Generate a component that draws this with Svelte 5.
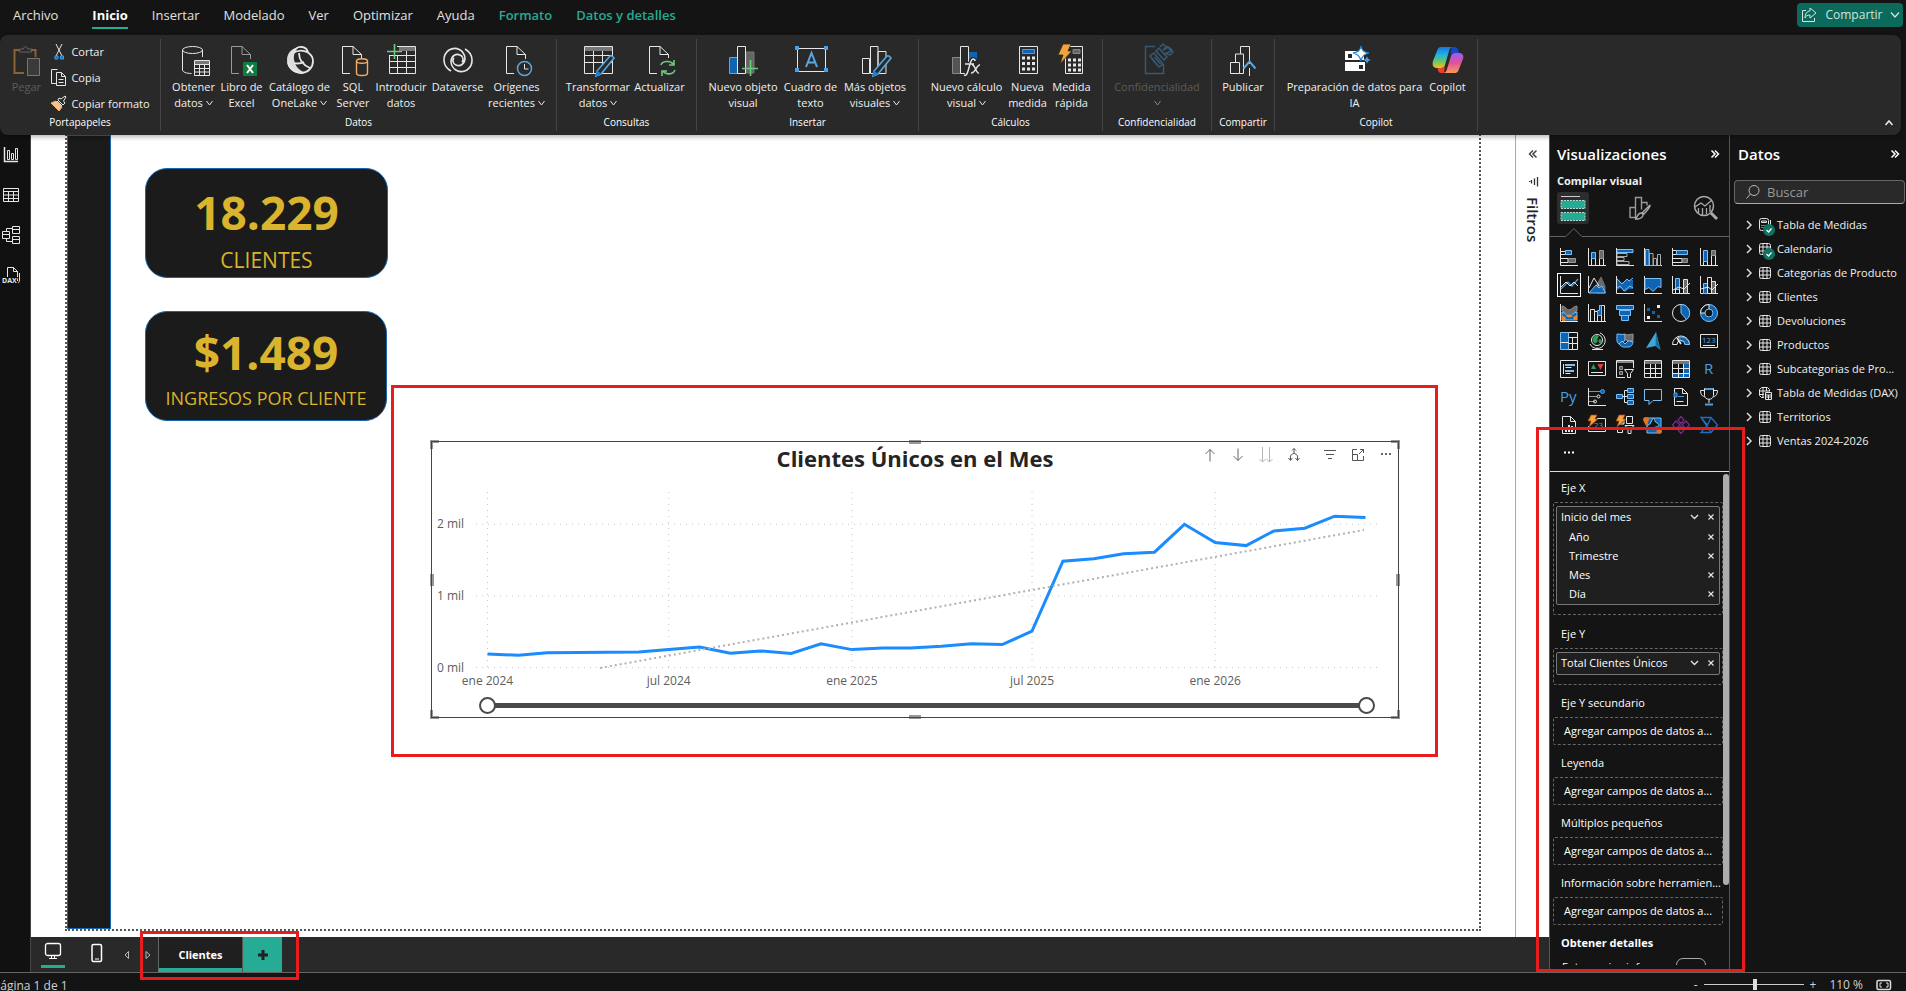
<script>
  const svg = (w, h, body, stroke = '#e6e6e6') =>
    `<svg width="${w}" height="${h}" viewBox="0 0 ${w} ${h}" fill="none" stroke="${stroke}" aria-hidden="true">${body}</svg>`;

  const B = '#0d65b3';
  const L = '#7cc0f4';
  const G = '#6b6b6b';

  const pencil = '<path d="M30 12l2 2-13 16-5 2 1-5 13-15z" fill="#292929" stroke="#5aa7e0" stroke-width="1.6"/><path d="M15 27l4 3-5 2z" fill="#1f7fd0" stroke="#1f7fd0"/>';
  const doc = '<path d="M16 2.500H5.500V29.500H13M16 2.500V10.500H24.500M16 2.500L24.500 10.500V15"/>';

  const big = {
    get: '<ellipse cx="14.500" cy="6" rx="10" ry="3.500"/><path d="M4.500 6V26c0 2 4 3.500 9 3.500M24.500 6v7"/><path d="M16.500 16.500h15v15h-15z" fill="#292929"/><path d="M17 17h14v3H17z" fill="#777" stroke="none"/><path d="M16.500 20.500h15M16.500 24.500h15M16.500 28h15M21.500 20v11M26.500 20v11"/>',
    excel: doc.replace('/>', ' stroke="#999"/>') + '<rect x="17" y="18" width="14" height="14" fill="#107c41" stroke="none"/><path d="M21 21l6 8M27 21l-6 8" stroke="#fff" stroke-width="2"/>',
    onelake: '<path d="M15 3C8 4 3 9 3 16c0 7 5 12 11 13 3 .5 6 .5 8-.5-6-1-11-6-12-13C9.500 11 11 6 15 3z" fill="#ddd" stroke="none"/><path d="M9 9c2-5 6-6.500 9-6 3 .5 5.500 2.500 6 5.500M9 9c4-2.500 10-3 15-.500M24 8.500c3 2 5 5 5 8.500 0 6-4 11-11 12-8 0-13-5-14-11M15 9c0 7 4 12 11 15M10 19c4 1 8 0 10-1" stroke-width="1.800"/>',
    sql: doc + '<path d="M19.500 17v12c0 3.400 11 3.400 11 0V17" fill="#292929" stroke="#f2ae66" stroke-width="1.400"/><ellipse cx="25" cy="17" rx="5.500" ry="2.300" fill="#292929" stroke="#f2ae66" stroke-width="1.400"/>',
    enter: '<path d="M12 2.500h18.500v27h-26V12M4 11.500h26.500M4 17.500h26.500M4 23.500h26.500M12.500 12v17M21.500 7v22"/><path d="M14 3h16v4H14z" fill="#777" stroke="none"/><path d="M2 7.500h15M9.500 0v15" stroke="#6ccb7f" stroke-width="1.600"/>',
    dataverse: '<path d="M9 27C0 22 0 11 7 6c7-4 15 0 16 8 0 6-5 9-9 7-3-1-4-5-2-7M23 5c9 5 9 16 2 21-7 4-15 0-16-8 0-6 5-9 9-7 3 1 4 5 2 7" stroke-width="1.600"/>',
    recent: doc + '<circle cx="23.500" cy="24.500" r="7" fill="#292929" stroke="#5aa7e0" stroke-width="1.500"/><path d="M23.500 20v5h4" stroke="#e6e6e6"/>',
    transform: '<path d="M2.500 2.500h28v27h-28zM2 11.500h28M2 18.500h28M11.500 7v22M20.500 7v22"/><path d="M3 3h27v4H3z" fill="#777" stroke="none"/>' + pencil,
    refresh: doc.replace('V15', 'V14') + '<path d="M17 21c1-4 9-5 12-1M30 16v5h-5M31 26c-2 5-9 5-12 1M18 32v-5h5" stroke="#6ccb7f" stroke-width="1.600"/>',
    visual: '<path d="M2.500 13.500h8v16h-8z" fill="#0d65b3" stroke="#5aa7e0"/><path d="M19 8h8v21h-8z" fill="#666" stroke="#777"/><path d="M10.500 2.500h8v27h-8z" fill="#292929"/><path d="M15 24.500h16M23.500 16v16" stroke="#6ccb7f" stroke-width="1.600"/>',
    textbox: '<path d="M2.500 4.500h28v23h-28z"/><path d="M0 3h4v4H0zM29 3h4v4h-4zM0 25h4v4H0zM29 25h4v4h-4z" fill="#4aa0e6" stroke="none" transform="translate(0 -1)"/><path d="M11 23l5.500-14L22 23M13 18.500h7" stroke="#5aa7e0" stroke-width="2"/>',
    more: '<path d="M3.500 14.500h7v15h-7zM19 7.500h8v22h-8zM11.500 2.500h7.500v27h-7.500z" fill="#292929"/>' + pencil,
    calc: '<path d="M1.500 13.500h8v16h-8z" fill="#555" stroke="#888"/><path d="M18 8h8v8h-8z" fill="#0d65b3" stroke="none"/><path d="M9.500 2.500h8v27h-8z"/><path d="M13 31c5 3 5-16 9-16 2 0 2 1 2 2M14 20h9M21 21c3-1 4 9 7 8M29 21c-3-1-5 9-9 8" stroke="#292929" stroke-width="4"/><path d="M13 31c5 3 5-16 9-16 2 0 2 1 2 2M14 20h9M21 21c3-1 4 9 7 8M29 21c-3-1-5 9-9 8" stroke-width="1.500"/>',
    measure: '<path d="M7.500 2.500h18v27h-18z"/><path d="M10.500 5.500h12v4h-12z" fill="#0d65b3" stroke="#4aa0e6"/><path d="M10 14h3m2 0h3m2 0h3M10 19.500h3m2 0h3m2 0h3M10 25h3m2 0h3m2 0h3" stroke-width="3"/>',
    quick: '<path d="M9.500 2.500h17v27h-17z"/><path d="M17 5.500h7v4h-7z" fill="#666" stroke="#888"/><path d="M12 16h3m2 0h3m2 0h3M12 21h3m2 0h3m2 0h3M12 26h3m2 0h3m2 0h3" stroke-width="3"/><path d="M7 0h8l-3 7h4L4 20l3-9H2z" fill="#f2a33a" stroke="#292929" stroke-width=".8"/>',
    sens: '<g stroke="#355a73" stroke-width="1.500"><path d="M14 2.500H4.500v27h18V20"/><path d="M9 12l9 11 4-3-9-11zM11 15l6 7M13.500 13l6 7"/><path d="M15 7l8 9 3-3-8-9zM19 3l3-3 3 3-3 3M24 10l6-3-3-4-4 3M26 2l4 3 2 3-3 3-3-1"/></g>',
    publish: '<path d="M3.500 29.500v-11h9v11zM8.500 18v-8h8v19.500h-4M13.500 10V2.500h9V20M22.500 24v8"/><path d="M16.500 24.500l6-7 6 7" stroke="#5aa7e0" stroke-width="2"/>',
    prep: '<rect x="6" y="18" width="20" height="9" fill="#fff" stroke="none"/><rect x="6" y="7" width="19" height="9" fill="#fff" stroke="none"/><path d="M9 10h4v4H9zM20 21h4v4h-4z" fill="#292929" stroke="none"/><path d="M22 2c1 5 3 6 8 7-5 1-7 3-8 8-1-5-3-7-8-8 5-1 7-2 8-7z" fill="#fff" stroke="#1f7fd0" stroke-width="1.200"/><path d="M28 12c.5 2 1 3 4 4-3 .5-3.500 2-4 4-.5-2-1-3.500-4-4 3-1 3.500-2 4-4z" fill="#4aa0e6" stroke="none"/>',
    copilot: '<defs><linearGradient id="cpA" x1="0" y1="0" x2="0" y2="1"><stop offset="0" stop-color="#1b74e8"/><stop offset=".4" stop-color="#22b8d8"/><stop offset=".7" stop-color="#6fc55c"/><stop offset="1" stop-color="#f4c120"/></linearGradient><linearGradient id="cpB" x1="0" y1="0" x2="0" y2="1"><stop offset="0" stop-color="#9b5cf0"/><stop offset=".5" stop-color="#e0529c"/><stop offset="1" stop-color="#fb9a55"/></linearGradient></defs><path d="M20 3h3c2 0 3 2 3.500 4l.8 2H21c-2 0-3 1-3.500 3z" fill="#1646c4" stroke="none"/><path d="M9 3h12c-2 0-3 1-4 4l-4 14c-.6 2-2 3-4 3H5c-4 0-5-3-4-7L5 7c.7-2.500 2-4 4-4z" fill="url(#cpA)" stroke="none"/><path d="M12 29H9c-2 0-3-1.500-3.500-5H9c2 0 3-1 4-3z" fill="#ee3f2a" stroke="none"/><path d="M23 29H11c2 0 3-1 4-4l4-13c.6-2 2-3 4-3h4c4 0 5 3 4 6l-4 10c-.7 2.500-2 4-4 4z" fill="url(#cpB)" stroke="none"/>'
  };

  const groups = [
    { name: 'Datos', w: 396, items: [
      { i: 'get', a: 'Obtener', b: 'datos', c: 1, w: 48 }, { i: 'excel', a: 'Libro de', b: 'Excel', w: 48 },
      { i: 'onelake', a: 'Catálogo de', b: 'OneLake', c: 1, w: 68 }, { i: 'sql', a: 'SQL', b: 'Server', w: 39 },
      { i: 'enter', a: 'Introducir', b: 'datos', w: 57 }, { i: 'dataverse', a: 'Dataverse', w: 56 },
      { i: 'recent', a: 'Orígenes', b: 'recientes', c: 1, w: 62 }] },
    { name: 'Consultas', w: 140, items: [
      { i: 'transform', a: 'Transformar', b: 'datos', c: 1, w: 66 }, { i: 'refresh', a: 'Actualizar', w: 57 }] },
    { name: 'Insertar', w: 222, items: [
      { i: 'visual', a: 'Nuevo objeto', b: 'visual', w: 75 }, { i: 'textbox', a: 'Cuadro de', b: 'texto', w: 60 },
      { i: 'more', a: 'Más objetos', b: 'visuales', c: 1, w: 69 }] },
    { name: 'Cálculos', w: 184, items: [
      { i: 'calc', a: 'Nuevo cálculo', b: 'visual', c: 1, w: 78 }, { i: 'measure', a: 'Nueva', b: 'medida', w: 44 },
      { i: 'quick', a: 'Medida', b: 'rápida', w: 44 }] },
    { name: 'Confidencialidad', w: 109, items: [{ i: 'sens', a: 'Confidencialidad', b: '', c: 1, w: 92, off: true }] },
    { name: 'Compartir', w: 63, items: [{ i: 'publish', a: 'Publicar', w: 50 }] },
    { name: 'Copilot', w: 203, items: [
      { i: 'prep', a: 'Preparación de datos para', b: 'IA', w: 143 }, { i: 'copilot', a: 'Copilot', w: 43 }] }
  ];

  const caret = svg(7, 6, '<path d="M.5 1l3 4 3-4"/>');
  const clip = [
    { t: 'Cortar', i: svg(20, 20, '<path d="M7 2l6 12M13 2L7 14"/><path d="M6 14h3v3H6zM11.500 14h3v3h-3z" fill="#0d65b3" stroke="#4aa0e6"/>') },
    { t: 'Copia', i: svg(20, 20, '<path d="M7 15.500H2.500v-14h6M7.500 4.500h5l4 4v9h-9zM12.500 4.500v4h4M9.500 11.500h5M9.500 14.500h5"/>') },
    { t: 'Copiar formato', i: svg(20, 20, '<path d="M2 9l8 8 3-4-6-6z" fill="#f6c58b" stroke="#f2ae66"/><path d="M8 7l5 5M9 6l5 5 2-2-1.500-2L17 3l-1-1-4 3-2-1z"/>') }
  ];
  const paste = svg(32, 32, '<path d="M9 6H4.500v23H14M22 6h3.500v7" stroke="#8a6234" stroke-width="2"/><path d="M9.500 8V5h4c0-3 4-3 4 0h4v3z" stroke="#666"/><path d="M17.500 14.500h12v17h-12z" fill="#3a3a3a" stroke="#777"/>');

  const rail = [
    ['Vista de informe', svg(18, 18, '<path d="M2.500 1v14.500H16" stroke-width="1.500"/><path d="M5.500 4.500h2v9h-2zM9.500 7.500h2v6h-2zM13.500 2.500h2v11h-2z"/>')],
    ['Vista de tabla', svg(18, 18, '<path d="M1.500 2.500h15v13h-15zM1 5.500h16M1 9h16M1 12.500h16M6.500 5v11M11.500 5v11"/>')],
    ['Vista de modelo', svg(20, 20, '<path d="M1.500 6.500h7v7h-7zM1.500 9.500h7M11.500 1.500h7v7h-7zM11.500 4.500h7M11.500 11.500h7v7h-7zM11.500 14.500h7M5.500 6V3.500h6M5.500 14v2.500h6"/>')],
    ['Vista de consultas DAX', svg(18, 18, '<path d="M5.500 11V1.500h6l4 4V15M11.500 1.500v4h4M17.500 7v7c0 2-1 3-2 3"/><text x="0" y="17" font-size="7" font-weight="700" font-family="Open Sans" fill="#e6e6e6" stroke="#111" stroke-width="2" paint-order="stroke">DAX</text>')]
  ];

  const axis = '<path d="M.5 0v17.500H18"/>';
  const bolt = '<path d="M3-1h6L7 3h3L1 11l2-6H0z" fill="#f2a33a" stroke="#a3400f" stroke-width=".7"/>';
  const vizIcons = [
    ['Gráfico de barras apiladas', `${axis}<path d="M1 3.500h5M1 6.500h5M1 10.500h7v4H1"/><path d="M5.500 2.500h6v4h-6z" fill="${B}" stroke="${L}"/><path d="M8.500 10.500h7v4h-7z" fill="${G}" stroke="#999"/>`],
    ['Gráfico de columnas apiladas', `${axis}<path d="M3.500 10.500h4v7h-4zM11.500 9.500h4v8h-4z"/><path d="M3.500 4.500h4v6h-4z" fill="${B}" stroke="${L}"/><path d="M11.500 2.500h4v8h-4z" fill="${G}" stroke="#999"/>`],
    ['Gráfico de barras agrupadas', `${axis}<path d="M1 1.500h16v3H1z" fill="${B}" stroke="${L}"/><path d="M1 5.500h10v3H1zM1 9.500h7v3H1zM1 13.500h12v3H1z" stroke="#aaa"/>`],
    ['Gráfico de columnas agrupadas', `${axis}<path d="M1.500 1.500h3.500v16H1.500z" fill="${B}" stroke="${L}"/><path d="M5.500 5.500h3.500v12H5.500zM9.500 10.500h3v7h-3zM13.500 6.500h3v11h-3z" stroke="#aaa"/>`],
    ['Barras 100% apiladas', `${axis}<path d="M1 2.500h4v4H1M1 10.500h9v4H1"/><path d="M4.500 2.500h11v4h-11z" fill="${B}" stroke="${L}"/><path d="M10.500 10.500h5v4h-5z" fill="${G}" stroke="#999"/>`],
    ['Columnas 100% apiladas', `${axis}<path d="M3.500 12.500h4v5h-4zM11.500 6.500h4v11h-4z"/><path d="M3.500 2.500h4v11h-4z" fill="${B}" stroke="${L}"/><path d="M11.500 2.500h4v5h-4z" fill="${G}" stroke="#999"/>`],
    ['Gráfico de líneas', `${axis}<path d="M1 13l7-7 4 4 6-7" stroke="#4aa0e6" stroke-width="1.200"/><path d="M1 11l5-5 4 4 4-4 4 4"/>`],
    ['Gráfico de áreas', `<path d="M8 10l5-9 4 9v7H9z" fill="${G}" stroke="${G}"/><path d="M.5 0v17M1 12L6 2l5 8"/><path d="M1 17l7-8 3 3 3-2 3.500 7z" fill="${B}" stroke="${L}"/>`],
    ['Áreas apiladas', `${axis}<path d="M1 2l5 5 4-3h7v9h-4l-4 3-4-4-4 2z" fill="${B}" stroke="none"/><path d="M1 3l5 5 5-5 2 2 4-3M1 12l3-2 4 5 6-5 3 2" stroke="${L}"/>`],
    ['Áreas 100% apiladas', `${axis}<path d="M1 2.500h16v9l-3-1-5 5-4-4-4 2z" fill="${B}" stroke="${L}"/>`],
    ['Columnas apiladas y líneas', `${axis}<path d="M3.500 2.500h4v11h-4z" fill="${B}" stroke="${L}"/><path d="M11.500 3.500h4v14h-4z" fill="${G}"/><path d="M3.500 17v-4M7.500 17v-4M1 14l6-3 5 2 6-6" />`],
    ['Columnas agrupadas y líneas', `${axis}<path d="M3.500 7.500h4v10h-4z" fill="${B}" stroke="${L}"/><path d="M11.500 5.500h4v12h-4z" fill="${G}"/><path d="M7.500 1.500h4v16h-4z" fill="#141414"/><path d="M1 13l7-2 4 3 6-6"/>`],
    ['Gráfico de la barra de herramientas', `<path d="M2 2c4 0 4 4 7 4s4-4 8-4v5c-3 0-4 4-8 4S5 7 2 7z" fill="${G}" stroke="#888"/><path d="M2 8c3 0 4 5 7 5s4-5 8-5v8H2z" fill="${B}" stroke="${L}"/><path d="M2 12l4 1-1 4H2zM7 11h5v2H7zM13 13l4-2v5h-3z" fill="#e58a2a" stroke="none"/>${axis}`],
    ['Gráfico de cascada', `${axis}<path d="M2.500 17V5.500h4V17M6.500 7.500h3V17M11.500 12V1.500h2V17M13.500 1.500h3V17"/><path d="M9.500 11.500v-5h2v-5h2v10z" fill="${B}" stroke="${L}"/>`],
    ['Embudo', `<path d="M.5 1.500h17v4h-17zM3.500 6.500h11v5h-11zM5.500 11.500h7v5h-7z" fill="${B}" stroke="${L}"/>`],
    ['Dispersión', `${axis}<path d="M13 1h3v3h-3zM3 12h3v3H3z" fill="#eee" stroke="none"/><path d="M3 4h3v3H3zM8 7h3v3H8zM13 11h3v3h-3z" fill="${B}" stroke="none"/>`],
    ['Gráfico circular', `<circle cx="9" cy="9" r="8.500"/><path d="M9 .5V9l5.500 6.500A8.500 8.500 0 0 0 9 .5z" fill="${B}" stroke="${L}"/>`],
    ['Anillo', `<circle cx="9" cy="9" r="6.500" stroke="${B}" stroke-width="4"/><circle cx="9" cy="9" r="8.500" stroke="${L}"/><circle cx="9" cy="9" r="4" stroke="${L}"/><path d="M9 2.500A6.500 6.500 0 0 0 2.500 9" stroke="#141414" stroke-width="3.500"/><path d="M9 .5v4.500M.5 9H5M9 .5A8.500 8.500 0 0 0 .5 9"/>`],
    ['Treemap', `<path d="M.5.5h8v17h-8z" fill="${B}" stroke="${L}"/><path d="M.5 10.500h8M8.500.5h9v17h-9M8.500 5.500h9M8.500 11.500h4v6M12.500 5.500v6h5"/>`],
    ['Mapa', `<circle cx="9" cy="8" r="5.500"/><path d="M5 7c1-3 4-4 5-3s-2 3-1 4-1 3-2 3-2-2-2-4zM11 8c1-1 3 0 2 2s-2 1-2-2z" fill="#2f9e52" stroke="#2f9e52"/><path d="M12 1a8 8 0 1 1-10 11M9 15.500v2M4 17.500h11"/>`],
    ['Mapa coroplético', `<path d="M1 2c3 0 5 1 8 0v6l-3 4H3C0 10 1 6 1 2z" fill="${B}" stroke="${L}"/><path d="M9 2c2 2 6 0 8 0v6c-3 2-5 0-8 0z" fill="${G}" stroke="#999"/><path d="M3 12l3-3 3 3 3-3c2 0 4 1 5 0 0 4-2 6-5 6s-6 1-9-3z" fill="${B}" stroke="${L}"/>`],
    ['Azure Maps', `<path d="M12 0l4.500 18-5-4-9.500 2z" fill="#3fa7d6" stroke="none"/><path d="M12 0l4.500 18-5-4z" fill="#1b6f9e" stroke="none"/>`],
    ['Medidor', `<path d="M.5 12.500a8.500 8.500 0 0 1 17 0h-4.500a4 4 0 0 0-8 0z"/><path d="M6 5.500a8.500 8.500 0 0 1 11.500 7H13a4 4 0 0 0-4-4z" fill="${B}" stroke="${L}"/><path d="M9 12l-4-6" stroke-width="1.600"/>`],
    ['Tarjeta', `<path d="M.5 2.500h17v13H.5zM3 13.500h12"/><text x="2" y="11" font-size="8" font-family="Open Sans" fill="#4aa0e6" stroke="none">123</text>`],
    ['Tarjeta de varias filas', `<path d="M.5.5h17v17H.5z"/><path d="M3.500 4v10M5.500 7.500h6M5.500 13.500h5"/><path d="M5 5h10M5 11h9" stroke="${L}" stroke-width="2"/>`],
    ['KPI', `<path d="M.5 1.500h17v14H.5zM3 12.500h12"/><path d="M3 9l2.500-5L8 9z" fill="#2f9e52" stroke="none"/><path d="M9.500 4h6l-3 6z" fill="#e33b3b" stroke="none"/>`],
    ['Segmentación', `<path d="M9 17.500H.5V.5h17V8"/><path d="M1 1h16v2H1z" fill="#888" stroke="none"/><path d="M3.500 6.500h3v3h-3zM3.500 11.500h3v3h-3z" fill="#555" stroke="#999"/><path d="M8.500 9.500h9l-3 4v4h-3v-4z"/>`],
    ['Tabla', `<path d="M.5.500h17v17H.5zM1 8.500h16M1 13.500h16M6.500 4v13M11.500 4v13"/><path d="M1 1h16v3H1z" fill="#777" stroke="none"/>`],
    ['Matriz', `<path d="M12 4h5v13h-5zM1 13h16v4H1z" fill="${B}" stroke="none"/><path d="M.5.5h17v17H.5zM1 8.500h16M1 13.500h16M6.500 4v13M11.500 4v13"/><path d="M1 1h16v3H1z" fill="#777" stroke="none"/>`],
    ['Objeto visual de R', `<text x="4" y="14" font-size="15" font-family="Open Sans" fill="#4aa0e6" stroke="none">R</text>`],
    ['Objeto visual de Python', `<text x="0" y="14" font-size="15" font-family="Open Sans" fill="#4aa0e6" stroke="none">Py</text>`],
    ['Influenciadores clave', `${axis}<path d="M1 8.500h8M1 13.500h6" stroke="#999"/><path d="M1 3.500h12" stroke="#4aa0e6"/><circle cx="14.500" cy="3.500" r="2" fill="${B}" stroke="#4aa0e6"/><circle cx="10.500" cy="8.500" r="1.500"/><circle cx="7" cy="13.500" r="1.500"/>`],
    ['Árbol de descomposición', `<path d="M6 8.500h5M8.500 8.500V2.500H11M8.500 8.500v6H11"/><path d="M.5 6.500h6v4h-6zM11.500.5h6v4h-6zM11.500 6.500h6v4h-6zM11.500 12.500h6v4h-6z" fill="${B}" stroke="${L}"/>`],
    ['Preguntas y respuestas', `<path d="M.5 1.500h17v11H9l-4 4v-4H.5z" stroke="${L}"/>`],
    ['Narración inteligente', `<path d="M2.500 5V.500h8l5 5v12h-13V9M10.500.5v5h5M4.500 13.500h7"/><path d="M2 5h3v4H2zM6 8.500h6" stroke="#4aa0e6" fill="${B}"/>`],
    ['Objetivos', `<path d="M4.500.5h9v7c0 5-9 5-9 0zM4.500 2.500h-4c0 4 2 6 4 6M13.500 2.500h4c0 4-2 6-4 6M9 11v4"/><path d="M5 1h8M5 16.500h8" stroke="#4aa0e6" stroke-width="2"/>`],
    ['Informe paginado', `<path d="M2.500 17.500V.5h8l5 5v12zM10.500.5v5h5"/><path d="M6 16v-4M9 16V9M12 16v-6" stroke-width="2"/>`],
    ['Tarjeta nueva', `<path d="M9 2.500h8.500v13H.5V10M3 13.500h12"/><text x="6" y="12" font-size="8" font-family="Open Sans" fill="#4aa0e6" stroke="none">23</text>${bolt}`],
    ['Segmentación nueva', `<path d="M10.500.5h6v7h-6zM1.500 11.500h5v5h-5zM9 9.500h9l-3 3v5h-3v-5z"/><path d="M4 4h4v4H4z" fill="#555"/>${bolt}`],
    ['ArcGIS Maps', `<path d="M3 2h14v15H3z" fill="${B}" stroke="${L}"/><path d="M9 2c3 2 1 4 4 5s2 4-1 4-2 3-5 2-4 1-4-2 4-2 4-5z" fill="#141414" stroke="${L}"/><path d="M2 10L-1 4a3 3 0 1 1 6 0z" fill="#e5731f" stroke="none"/><circle cx="15" cy="15" r="2.500" fill="#e5731f" stroke="none"/>`],
    ['Power Apps', `<path d="M9 .5l3 3.500-3 3.500L6 4zM4 5l4 4-4 4-3.500-4zM14 5l3.500 4-3.500 4-4-4zM9 10.500l3 3.500-3 3.500L6 14z" stroke="#7a2a88" stroke-width="1.200"/>`],
    ['Power Automate', `<path d="M1 1.500h10l6.500 7.500-6.500 7.500H1L7.500 9zM1 1.500l10 15M11 1.500L7.500 9" stroke="#1f6fbf" stroke-width="1.300"/>`]
  ];

  const tables = [
    ['Tabla de Medidas', 'calc', true], ['Calendario', 'grid', true], ['Categorias de Producto', 'grid'], ['Clientes', 'grid'],
    ['Devoluciones', 'grid'], ['Productos', 'grid'], ['Subcategorias de Pro...', 'grid'], ['Tabla de Medidas (DAX)', 'mix'],
    ['Territorios', 'grid'], ['Ventas 2024-2026', 'grid']
  ];
  const treeIcon = {
    grid: svg(14, 14, '<rect x="1.500" y="1.500" width="11" height="11" rx="2"/><path d="M1 5h12M1 9h12M5 1v12M9 1v12"/>'),
    calc: svg(14, 14, '<rect x="1.500" y=".5" width="9" height="12" rx="2"/><path d="M3.500 3h5v1.500h-5zM3.500 7.500h1m1 0h1m1 0h1M3.500 9.500h1m1 0h1M12.500 2v9"/>'),
    mix: svg(14, 14, '<path d="M6 11.500H3.500l-2-2v-6l2-2h6l2 2V5M1 5h11M1 8.500h5M5 1v10M8.500 1v4"/><path d="M7.500 6.500h6v7h-6zM7.500 9h6M7.500 11h6M10.500 9v4"/>')
  };
  const tick = svg(12, 12, '<circle cx="6" cy="6" r="6" fill="#0e7360" stroke="none"/><path d="M3.500 6l2 2 3-3.500" stroke="#fff" stroke-width="1.200"/>');
  const right = svg(8, 10, '<path d="M2 1l4 4-4 4" stroke-width="1.400"/>');
  const down = svg(9, 8, '<path d="M1 2l3.500 3.500L8 2" stroke-width="1.300"/>');
  const cross = svg(8, 8, '<path d="M1.500 1.500l5 5M6.500 1.500l-5 5" stroke-width="1.100"/>');
  const dblRight = svg(10, 10, '<path d="M1.500 1.500L5 5 1.500 8.500M5 1.500L8.500 5 5 8.500" stroke-width="1.500"/>', '#fff');
  const dblLeft = svg(10, 10, '<path d="M5 1.500L1.500 5 5 8.500M8.500 1.500L5 5l3.500 3.500" stroke-width="1.500"/>', '#444');

  const tools = [
    ['Rastrear agrupando datos', svg(16, 16, '<path d="M8 2.500v12M3.500 7L8 2.500 12.500 7"/>', '#666'), 28],
    ['Explorar en profundidad', svg(16, 16, '<path d="M8 1.500v12M3.500 9L8 13.500 12.500 9"/>', '#666'), 28],
    ['Ir al siguiente nivel', svg(16, 16, '<path d="M4.500 0v15M1.500 12l3 3 3-3M11.500 0v15M8.500 12l3 3 3-3"/>', '#b5b5b5'), 28],
    ['Expandir jerarquía', svg(16, 16, '<path d="M8 1.500V6M6 3.500l2-2 2 2M4.500 13V8.500L8 6l3.500 2.500V13M2.500 11l2 2.500 2-2.500M9.500 11l2 2.500 2-2.500"/>', '#555'), 36],
    ['Filtros', svg(16, 16, '<path d="M2 3.500h12M4 7.500h8M6 11.500h4"/>', '#555'), 28],
    ['Modo de enfoque', svg(16, 16, '<path d="M7 2.500H2.500v11h11V9M10 2.500h3.500V6M13.500 2.500L9 7M2.500 7.500h5v6"/>', '#555'), 28],
    ['Más opciones', svg(16, 16, '<path d="M3 7h2m2 0h2m2 0h2" stroke-width="2"/>', '#666'), 20]
  ];

  const wells = ['Eje Y secundario', 'Leyenda', 'Múltiplos pequeños', 'Información sobre herramien...'];

  // Chart geometry inside the visual frame
  const start = Date.UTC(2024, 0, 1);
  const xOf = (m) => 55.5 + ((Date.UTC(2024, m, 1) - start) / 86400000) * 0.9955;
  const yOf = (v) => 225.5 - v * 0.0716;
  const clientes = [190, 170, 205, 210, 213, 217, 250, 286, 200, 232, 195, 333, 250, 274, 274, 297, 333, 320, 507, 1484, 1520, 1590, 1610, 2000, 1745, 1703, 1908, 1945, 2113, 2093];
  const line = clientes.map((v, m) => `${xOf(m).toFixed(1)},${yOf(v).toFixed(1)}`).join(' ');
  const xTicks = [[0, 'ene 2024'], [6, 'jul 2024'], [12, 'ene 2025'], [18, 'jul 2025'], [24, 'ene 2026']];

  let from = $state(0);
  let to = $state(100);
  let zoom = $state(52);
</script>

<div class="app">
  <header class="menubar">
    <nav>
      <a class="file" href="#archivo">Archivo</a>
      <a class="on" href="#inicio">Inicio</a>
      <a href="#insertar">Insertar</a>
      <a href="#modelado">Modelado</a>
      <a href="#ver">Ver</a>
      <a href="#optimizar">Optimizar</a>
      <a href="#ayuda">Ayuda</a>
      <a class="ctx" href="#formato">Formato</a>
      <a class="ctx" href="#detalles">Datos y detalles</a>
    </nav>
    <button class="share">
      {@html svg(18, 18, '<path d="M6 4.500H2.500v11h12V12M10 2l6 5-6 5V9c-3 0-4 1-5 3 0-4 2-7 5-7z"/>', '#cfe5df')}
      Compartir
      {@html svg(10, 8, '<path d="M1 1.500L5 6l4-4.500" stroke-width="1.300"/>', '#cfe5df')}
    </button>
  </header>

  <section class="ribbon">
    <div class="group clipgroup">
      <div class="items">
        <button class="cmd off paste" disabled><span class="ic">{@html paste}</span><span>Pegar</span></button>
        <div class="stack">
          {#each clip as c}
            <button>{@html c.i}{c.t}</button>
          {/each}
        </div>
      </div>
      <div class="gname">Portapapeles</div>
    </div>
    {#each groups as g}
      <div class="group" style:width="{g.w}px">
        <div class="items">
          {#each g.items as it}
            <button class="cmd" class:off={it.off} disabled={it.off} style:width="{it.w}px">
              <span class="ic">{@html svg(32, 32, big[it.i])}</span>
              <span>{it.a}</span>
              <span>{it.b ?? ''}{#if it.c}<i>{@html caret}</i>{/if}</span>
            </button>
          {/each}
        </div>
        <div class="gname">{g.name}</div>
      </div>
    {/each}
    <button class="collapse" aria-label="Contraer cinta">{@html svg(10, 8, '<path d="M1.500 6L5 2l3.500 4" stroke-width="1.600"/>')}</button>
  </section>

  <main class="work">
    <nav class="rail">
      {#each rail as [t, i]}
        <button aria-label={t}>{@html i}</button>
      {/each}
    </nav>

    <div class="center">
      <div class="stage">
        <div class="canvas">
          <div class="page"></div>
          <div class="strip"></div>
          <article class="card one"><strong>18.229</strong><span>CLIENTES</span></article>
          <article class="card two"><strong>$1.489</strong><span>INGRESOS POR CLIENTE</span></article>

          <section class="visual">
            <h2>Clientes Únicos en el Mes</h2>
            <div class="tools">
              {#each tools as [t, i, w]}
                <button aria-label={t} style:width="{w}px">{@html i}</button>
              {/each}
            </div>
            <svg class="plot" width="966" height="250" viewBox="0 0 966 250">
              {#each [0, 1000, 2000] as v}
                <line class="grid" x1="44" x2="945" y1={yOf(v)} y2={yOf(v)} />
                <text x="5" y={yOf(v) + 4}>{v / 1000} mil</text>
              {/each}
              {#each xTicks as [m]}
                <line class="grid" x1={xOf(m)} x2={xOf(m)} y1="50" y2="227" />
              {/each}
              <polyline points={line} fill="none" stroke="#1a8cff" stroke-width="3" />
              <line class="trend" x1="168" y1="226" x2="932" y2="88" />
              {#each xTicks as [m, t]}
                <text x={xOf(m)} y="243" text-anchor="middle">{t}</text>
              {/each}
            </svg>
            <div class="range">
              <input type="range" aria-label="Inicio del intervalo" bind:value={from} />
              <input type="range" aria-label="Fin del intervalo" bind:value={to} />
            </div>
            <svg class="handles" viewBox="0 0 970 279" fill="#444" fill-opacity=".55" aria-hidden="true">
              <path d="M0 0h9v3H3v6H0zM961 0h9v9h-3V3h-6zM0 270h3v6h6v3H0zM967 270h3v9h-9v-3h6zM479 0h12v4h-12zM479 275h12v4h-12zM0 134h4v12H0zM966 134h4v12h-4z" />
            </svg>
          </section>
          <div class="mark chartmark"></div>
        </div>

        <aside class="filters">
          <button aria-label="Expandir filtros">{@html dblLeft}</button>
          {@html svg(12, 12, '<path d="M10.500 1v9.500M7.500 2.500V9M4.500 4v3.500" stroke-width="1.300"/><path d="M2 5.500h1.500"/>', '#333')}
          <span>Filtros</span>
        </aside>
      </div>

      <footer class="tabs">
        <button class="dev sel" aria-label="Diseño de escritorio">{@html svg(18, 18, '<rect x="1.500" y="1.500" width="15" height="12" rx="2" stroke-width="1.300"/><path d="M5 16.500h8M7.500 14v2M10.500 14v2" />', '#fff')}</button>
        <button class="dev" aria-label="Diseño móvil">{@html svg(14, 20, '<rect x="2" y="1.500" width="9.500" height="17" rx="1.500" stroke-width="1.500"/><path d="M5 16h4"/>', '#fff')}</button>
        <button class="arr" aria-label="Página anterior">{@html svg(8, 10, '<path d="M5.500 1.500v7L2 5z"/>', '#bbb')}</button>
        <button class="arr" aria-label="Página siguiente">{@html svg(8, 10, '<path d="M2 1.500v7L6 5z"/>', '#bbb')}</button>
        <button class="tab">Clientes</button>
        <button class="add" aria-label="Página nueva">{@html svg(12, 12, '<path d="M6 1v10M1 6h10" stroke-width="3"/>', '#222')}</button>
      </footer>
    </div>

    <aside class="viz">
      <div class="phead"><h3>Visualizaciones</h3><button aria-label="Contraer visualizaciones">{@html dblRight}</button></div>
      <h4>Compilar visual</h4>
      <div class="modes">
        <button class="sel" aria-label="Compilar">{@html svg(24, 26, '<path d="M0 1.500h19" stroke="#ccc"/><path d="M0 5.500h24v8H0zM0 17.500h24v8H0z" fill="#26ab94" stroke="#b5d8d0" stroke-dasharray="2 1"/>')}</button>
        <button aria-label="Formato">{@html svg(24, 24, '<path d="M2 22V11.500h5.500V22M7.500 12V1.500h6v12M14 6.500h5v3M2 21.500h7" stroke="#999" stroke-width="1.400"/><path d="M22 9l-8 8M22 9c1 1-4 7-6 9l-2-2M13 17c3 0 3 5-3 6H7c3-1 2-6 6-6z" stroke="#aaa" stroke-width="1.400"/>')}</button>
        <button aria-label="Análisis">{@html svg(26, 26, '<circle cx="11" cy="11" r="9.500" stroke="#aaa" stroke-width="1.500"/><path d="M18 18l6 6" stroke="#aaa" stroke-width="3"/><path d="M2 12l6-4 4 3 7-6M5.500 18v-5M9.500 20v-7M13.500 19v-6M17 17v-7" stroke="#aaa" stroke-width="1.300"/>')}</button>
      </div>
      <svg class="notch" viewBox="0 0 180 10" fill="none" stroke="#666" aria-hidden="true"><path d="M0 9.500h16l8-8 8 8h148" /></svg>
      <div class="gallery">
        {#each vizIcons as [t, i], n}
          <button aria-label={t} class:picked={n === 6}>{@html svg(18, 18, i)}</button>
        {/each}
        <button aria-label="Obtener más objetos visuales">{@html svg(18, 18, '<path d="M4 8.500h2m2 0h2m2 0h2" stroke-width="2"/>', '#fff')}</button>
      </div>
      <div class="wells">
        <div class="wname">Eje X</div>
        <div class="drop full tall">
          <div class="chip">
            <div class="row first"><span>Inicio del mes</span><button aria-label="Opciones">{@html down}</button><button aria-label="Quitar">{@html cross}</button></div>
            {#each ['Año', 'Trimestre', 'Mes', 'Día'] as f}
              <div class="row sub"><span>{f}</span><button aria-label="Quitar {f}">{@html cross}</button></div>
            {/each}
          </div>
        </div>
        <div class="wname">Eje Y</div>
        <div class="drop full">
          <div class="chip">
            <div class="row first"><span>Total Clientes Únicos</span><button aria-label="Opciones">{@html down}</button><button aria-label="Quitar">{@html cross}</button></div>
          </div>
        </div>
        {#each wells as w}
          <div class="wname">{w}</div>
          <div class="drop">Agregar campos de datos a...</div>
        {/each}
        <div class="wname bold">Obtener detalles</div>
        <label class="toggle">Entre varios informes<input type="checkbox" /></label>
        <div class="bar"></div>
      </div>
    </aside>

    <aside class="data">
      <div class="phead"><h3>Datos</h3><button aria-label="Contraer datos">{@html dblRight}</button></div>
      <label class="search">
        {@html svg(16, 16, '<circle cx="7" cy="6.500" r="5"/><path d="M10.500 10l4 4.500"/>', '#bbb')}
        <input type="search" placeholder="Buscar" aria-label="Buscar" />
      </label>
      <ul>
        {#each tables as [t, k, ok]}
          <li><button>{@html right}<span class="ti">{@html treeIcon[k]}{#if ok}<b>{@html tick}</b>{/if}</span>{t}</button></li>
        {/each}
      </ul>
    </aside>
  </main>

  <footer class="status">
    <span class="pageno">Página 1 de 1</span>
    <div class="zoom">
      <button aria-label="Alejar">-</button>
      <input type="range" aria-label="Zoom" bind:value={zoom} />
      <button aria-label="Acercar">+</button>
      <span>110 %</span>
      <button aria-label="Ajustar a la página">{@html svg(16, 12, '<rect x="1" y="1.500" width="13.500" height="9" rx="1.500" stroke-width="1.500"/><path d="M6 4H4v4h2M10 4h2v4h-2"/>', '#ddd')}</button>
    </div>
  </footer>

  <div class="mark tabmark"></div>
  <div class="mark wellmark"></div>
</div>

<style>
  :global(body) { background: #141414; }
  .app {
    position: relative; display: flex; flex-direction: column; height: 100vh; overflow: hidden;
    background: #141414; color: #f0f0f0; font: 11px/16px "Open Sans", "Noto Sans", sans-serif;
  }
  .app :global(*) { box-sizing: border-box; }
  .app :global(svg) { display: block; flex: none; overflow: visible; }
  button { background: none; border: 0; padding: 0; margin: 0; color: inherit; font: inherit; display: flex; align-items: center; justify-content: center; }
  a { color: inherit; text-decoration: none; }
  h2, h3, h4, ul { margin: 0; padding: 0; }

  .menubar { display: flex; justify-content: space-between; align-items: flex-start; height: 35px; flex: none; padding: 3px 3px 0 13px; }
  nav { display: flex; }
  .menubar nav { gap: 24px; font-size: 13px; line-height: 24px; color: #e0e0e0; }
  .menubar a { height: 26px; white-space: nowrap; }
  .menubar .file { margin-right: 10px; }
  .menubar .on { font-weight: 700; color: #fff; border-bottom: 2px solid #26ab94; }
  .menubar .ctx { color: #26ab94; font-weight: 600; }
  .share { gap: 7px; height: 24px; width: 106px; background: #0b6a5b; border-radius: 4px; font-size: 12px; color: #cfe5df; }

  .ribbon { position: relative; z-index: 2; display: flex; height: 100px; flex: none; margin-right: 5px; background: #292929; border-radius: 8px; box-shadow: 0 2px 5px rgba(0, 0, 0, .3); }
  .group { display: flex; flex-direction: column; flex: none; margin: 4px 0; border-right: 1px solid #444; padding-top: 5px; }
  .clipgroup { width: 161px; }
  .items { display: flex; justify-content: center; height: 70px; }
  .cmd { flex-direction: column; justify-content: flex-start; white-space: nowrap; height: 70px; }
  .cmd span { display: flex; align-items: center; justify-content: center; height: 16px; gap: 3px; }
  .cmd .ic { height: 35px; align-items: flex-start; }
  .off { color: #5c5c5c; }
  .off i { opacity: .5; }
  .stack { display: flex; flex-direction: column; justify-content: space-between; padding-left: 7px; margin-top: -2px; height: 72px; }
  .stack button { justify-content: flex-start; gap: 2px; height: 20px; white-space: nowrap; }
  .gname { text-align: center; font-size: 10px; line-height: 14px; padding-top: 1px; font-weight: 500; color: #fff; }
  .collapse { margin: auto 7px 8px auto; }

  .work { display: flex; flex: 1; min-height: 0; }
  .rail { flex: 0 0 31px; flex-direction: column; align-items: flex-start; gap: 20px; padding-top: 10px; border-right: 1px solid #444; background: #111; }
  .rail button { width: 21px; height: 20px; }
  .center { flex: 1; display: flex; flex-direction: column; min-width: 0; }
  .stage { flex: 1; display: flex; min-height: 0; background: #fff; }
  .canvas { position: relative; flex: 1; overflow: hidden; }
  .page { position: absolute; left: 34px; right: 34px; top: -4px; bottom: 6px; border: 2px dotted #555; }
  .strip { position: absolute; left: 36px; top: 0; bottom: 8px; width: 44px; background: #1b1b1b; border: 1px solid #1866b4; }
  .card { position: absolute; left: 114px; height: 110px; background: #1b1b1b; border: 1px solid #1866b4; border-radius: 22px; display: flex; flex-direction: column; align-items: center; color: #dab42c; }
  .card strong { font-size: 46px; line-height: 60px; }
  .card.one { top: 33px; width: 243px; padding-top: 13px; }
  .card.two { top: 176px; width: 242px; padding-top: 10px; }
  .card.one span { font-size: 21px; line-height: 36px; }
  .card.two span { font-size: 18px; line-height: 32px; }

  .visual { position: absolute; left: 400px; top: 306px; width: 968px; height: 277px; border: 1px solid #444; color: #252423; }
  .visual h2 { text-align: center; font-size: 22px; line-height: 32px; font-weight: 700; }
  .tools { position: absolute; right: 0; top: 4px; display: flex; }
  .tools button { justify-content: flex-start; height: 18px; }
  .plot { position: absolute; left: 0; top: 0; overflow: visible; }
  .plot text { font-size: 12px; fill: #605e5c; }
  .grid { stroke: #c8c8c8; stroke-dasharray: 1 5; stroke-width: 1; }
  .trend { stroke: #b0b0b0; stroke-width: 2; stroke-dasharray: 2 3; }
  .range { position: absolute; left: 47px; width: 896px; top: 255px; height: 16px; }
  .range::before { content: ""; position: absolute; left: 8px; right: 8px; top: 6px; height: 5px; background: #4a4a4a; }
  .range input { position: absolute; inset: 0; width: 100%; height: 16px; margin: 0; appearance: none; background: none; pointer-events: none; }
  .range input::-webkit-slider-thumb { appearance: none; width: 17px; height: 17px; border: 2px solid #4a4a4a; border-radius: 50%; background: #fff; pointer-events: auto; }
  .handles { position: absolute; left: -2px; top: -2px; width: 970px; height: 279px; pointer-events: none; }

  .mark { position: absolute; border: 3px solid #e81c1c; pointer-events: none; z-index: 3; }
  .chartmark { left: 360px; top: 250px; width: 1047px; height: 372px; }
  .tabmark { left: 140px; bottom: 11px; width: 159px; height: 49px; }
  .wellmark { right: 161px; bottom: 19px; width: 209px; height: 545px; }

  .filters { flex: 0 0 34px; border-left: 1px solid #aaa; display: flex; flex-direction: column; align-items: center; padding-top: 14px; gap: 17px; color: #252423; }
  .filters span { writing-mode: vertical-rl; font-size: 15px; line-height: 20px; font-weight: 600; margin-top: -8px; }

  .tabs { display: flex; height: 35px; flex: none; background: #292929; }
  .dev { width: 24px; height: 31px; margin-left: 10px; }
  .dev + .dev { margin: 0 0 0 20px; }
  .dev.sel { border-bottom: 3px solid #26ab94; }
  .arr { width: 8px; height: 35px; margin-left: 13px; }
  .dev + .arr { margin-left: 14px; }
  .tab { width: 84px; margin-left: 6px; border-left: 1px solid #666; border-bottom: 4px solid #26ab94; background: #1f1f1f; font-weight: 700; padding-top: 5px; color: #fff; }
  .add { width: 40px; border-left: 1px solid #555; background: #26ab94; }

  .viz { flex: 0 0 181px; display: flex; flex-direction: column; border: solid #555; border-width: 0 1px; overflow: hidden; }
  .phead { display: flex; justify-content: space-between; align-items: center; height: 38px; padding: 0 9px 0 7px; flex: none; }
  h3 { font-size: 15px; font-weight: 600; color: #fff; }
  h4 { font-size: 11px; font-weight: 700; line-height: 16px; padding-left: 7px; }
  .modes { display: flex; padding: 3px 7px 0 7px; justify-content: space-between; flex: none; }
  .modes button { width: 32px; height: 32px; }
  .modes .sel { background: #2d2d2d; border-radius: 3px; }
  .notch { width: 100%; height: 10px; margin-top: 3px; }
  .gallery { display: grid; grid-template-columns: repeat(6, 28px); grid-auto-rows: 28px; padding: 6px 0 0 5px; height: 234px; flex: none; align-items: center; justify-items: center; }
  .gallery button { width: 24px; height: 24px; border: 1px solid transparent; }
  .gallery .picked { border-color: #fff; }

  .wells { position: relative; border-top: 1px solid #ddd; padding: 5px 6px 0 3px; flex: 1; min-height: 0; overflow: hidden; color: #fff; margin-bottom: 7px; }
  .wname { height: 25px; line-height: 21px; padding-left: 8px; white-space: nowrap; }
  .bold { font-weight: 700; }
  .drop { height: 28px; border: 1px dashed #666; border-radius: 2px; padding-left: 10px; line-height: 26px; margin-bottom: 7px; white-space: nowrap; }
  .drop.full { padding: 3px 2px; height: 37px; }
  .drop.tall { height: 113px; margin-bottom: 8px; }
  .chip { border: 1px solid #777; border-radius: 2px; background: #1f1f1f; padding-bottom: 1px; }
  .row { display: flex; align-items: center; height: 19px; padding: 0 4px 0 12px; }
  .row span { flex: 1; }
  .row button { width: 9px; margin-left: 7px; }
  .row.first { height: 20px; padding-left: 4px; }
  .toggle { display: flex; justify-content: space-between; padding: 0 17px 0 9px; line-height: 20px; }
  .toggle input { appearance: none; width: 30px; height: 14px; margin: 1px 0 0; border: 1px solid #aaa; border-radius: 7px; }
  .bar { position: absolute; right: 0; top: 2px; width: 6px; height: 411px; background: #adadad; border-radius: 3px; }

  .data { flex: 0 0 176px; overflow: hidden; }
  .data .phead { padding: 0 6px 0 8px; }
  .search { display: flex; align-items: center; gap: 6px; height: 24px; margin: 7px 1px 9px 4px; padding: 0 10px; background: #292929; border: 1px solid #666; border-bottom-color: #aaa; border-radius: 4px; }
  .search :global(svg) { transform: scaleX(-1); }
  .search input { flex: 1; min-width: 0; background: none; border: 0; padding: 0; font: 13px/20px "Open Sans", sans-serif; color: #ddd; outline: 0; }
  .search input::placeholder { color: #999; }
  ul { list-style: none; }
  li { height: 24px; padding-left: 15px; }
  li button { height: 24px; white-space: nowrap; }
  .ti { position: relative; margin: 0 5px; }
  .ti b { position: absolute; left: 5px; top: 6px; }

  .status { display: flex; justify-content: space-between; height: 19px; flex: none; border-top: 1px solid #666; padding: 4px 14px 0 0; color: #d0d0d0; line-height: 17px; }
  .pageno { margin-left: -7px; font-size: 12px; }
  .zoom { display: flex; align-items: center; gap: 6px; height: 15px; font-size: 12px; }
  .zoom span { margin: 0 7px; }
  .zoom input { width: 100px; height: 12px; margin: 0; appearance: none; background: linear-gradient(#ccc, #ccc) center / 100% 1px no-repeat; }
  .zoom input::-webkit-slider-thumb { appearance: none; width: 4px; height: 11px; background: #ddd; }
</style>
